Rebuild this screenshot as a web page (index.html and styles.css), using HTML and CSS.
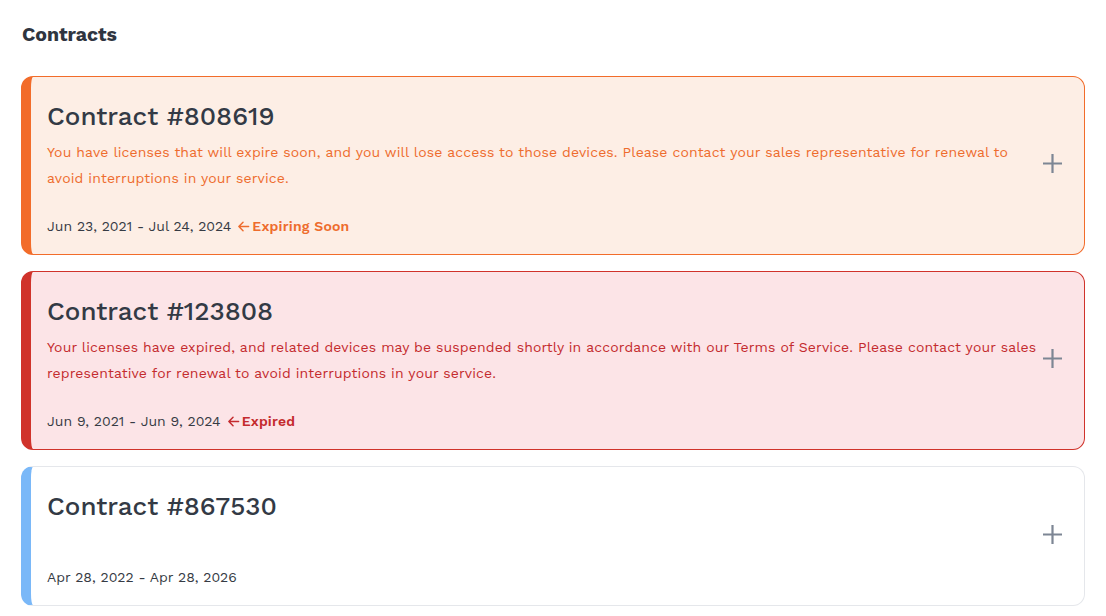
FILE: index.html
```html
<!DOCTYPE html>
<html>
<head>
<meta charset="utf-8">
<link rel="stylesheet" href="styles.css">
</head>
<body>
<main class="page">
  <h2 class="heading">Contracts</h2>
  <div class="list">
    <section class="card card--warn">
      <div class="card__body">
        <h3 class="card__title">Contract #808619</h3>
        <p class="card__desc">You have licenses that will expire soon, and you will lose access to those devices. Please contact your sales representative for renewal to avoid interruptions in your service.</p>
        <div class="card__dates">Jun 23, 2021 - Jul 24, 2024 <span class="status"><svg class="arrow" viewBox="0 0 14 14" width="13" height="13"><path d="M12.5 7H2M6.5 2.5L2 7L6.5 11.5" fill="none" stroke="currentColor" stroke-width="1.6" stroke-linecap="round" stroke-linejoin="round"/></svg>Expiring Soon</span></div>
      </div>
      <button class="card__toggle" aria-label="Expand"><svg viewBox="0 0 19 19" width="19" height="19"><path d="M9.5 0V19M0 9.5H19" stroke="currentColor" stroke-width="2.2"/></svg></button>
    </section>
    <section class="card card--error">
      <div class="card__body">
        <h3 class="card__title">Contract #123808</h3>
        <p class="card__desc">Your licenses have expired, and related devices may be suspended shortly in accordance with our Terms of Service. Please contact your sales representative for renewal to avoid interruptions in your service.</p>
        <div class="card__dates">Jun 9, 2021 - Jun 9, 2024 <span class="status"><svg class="arrow" viewBox="0 0 14 14" width="13" height="13"><path d="M12.5 7H2M6.5 2.5L2 7L6.5 11.5" fill="none" stroke="currentColor" stroke-width="1.6" stroke-linecap="round" stroke-linejoin="round"/></svg>Expired</span></div>
      </div>
      <button class="card__toggle" aria-label="Expand"><svg viewBox="0 0 19 19" width="19" height="19"><path d="M9.5 0V19M0 9.5H19" stroke="currentColor" stroke-width="2.2"/></svg></button>
    </section>
    <section class="card card--ok">
      <div class="card__body">
        <h3 class="card__title">Contract #867530</h3>
        <p class="card__desc card__desc--empty"></p>
        <div class="card__dates">Apr 28, 2022 - Apr 28, 2026</div>
      </div>
      <button class="card__toggle" aria-label="Expand"><svg viewBox="0 0 19 19" width="19" height="19"><path d="M9.5 0V19M0 9.5H19" stroke="currentColor" stroke-width="2.2"/></svg></button>
    </section>
  </div>
</main>
</body>
</html>
```

FILE: styles.css
```css
* { box-sizing: border-box; }
html, body { margin: 0; background: #fff; }
body {
  font-family: "Work Sans", Inter, "Noto Sans", sans-serif;
  color: #333a45;
}
.page {
  padding: 22px 21px 0 21px;
}
.heading {
  margin: 0 0 28px 1px;
  font-size: 19.5px;
  line-height: 26px;
  font-weight: 700;
  color: #2f3540;
}
.list {
  display: flex;
  flex-direction: column;
  gap: 16px;
}
.card {
  display: flex;
  align-items: center;
  border: 1px solid #e5e7eb;
  border-left: 10px solid #7ab8f8;
  border-radius: 12px;
  background: #fff;
  padding: 23px 22px 18px 16px;
}
.card--warn {
  background: #fdeee5;
  border-color: #f26c2a;
}
.card--warn .card__desc, .card--warn .status { color: #ee6c2d; }
.card--error {
  background: #fce4e7;
  border-color: #d0332b;
}
.card--error .card__desc, .card--error .status { color: #c42b2e; }
.card__body {
  flex: 1;
  min-width: 0;
  padding-right: 3px;
}
.card__title {
  margin: 0;
  font-size: 26px;
  line-height: 32px;
  font-weight: 500;
  color: #333a45;
}
.card__desc {
  margin: 7px 0 0;
  font-size: 14px;
  line-height: 26px;
  letter-spacing: 0.12px;
}
.card__desc--empty { min-height: 13px; }
.card__dates {
  margin-top: 25px;
  font-size: 14px;
  line-height: 20px;
  color: #363b44;
  display: flex;
  align-items: center;
  gap: 6px;
}
.status {
  display: inline-flex;
  align-items: center;
  gap: 2px;
  font-weight: 600;
  letter-spacing: 0.2px;
}
.arrow { display: block; }
.card__toggle {
  flex: none;
  background: none;
  border: 0;
  padding: 0;
  margin: 0 0 9px;
  color: #7d8694;
  width: 19px;
  height: 19px;
  display: flex;
}
```
